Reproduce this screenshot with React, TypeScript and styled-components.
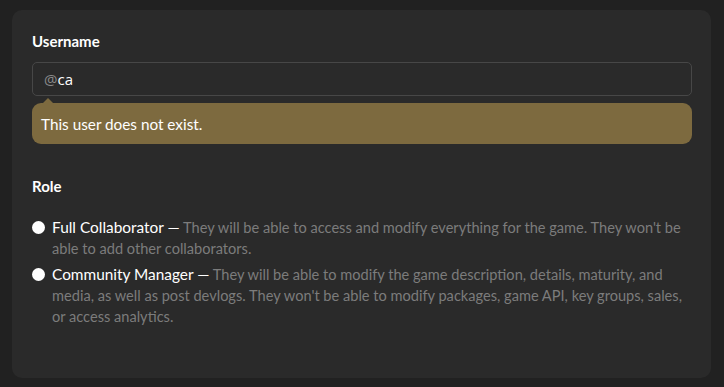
import React from "react";
import styled, { createGlobalStyle } from "styled-components";

const Global = createGlobalStyle`
  html, body { margin: 0; padding: 0; background: #212121; }
  body { font-family: "Lato", "Noto Sans", sans-serif; }
`;

const Page = styled.div`
  padding: 10px 13px 9px 12px;
  width: 724px;
  box-sizing: border-box;
`;

const Card = styled.div`
  background: #2a2a2a;
  border-radius: 10px;
  padding: 18px 19px 40px 20px;
  box-sizing: border-box;
  height: 368px;
`;

const Heading = styled.div`
  color: #ffffff;
  font-family: "Lato", sans-serif;
  font-weight: 700;
  font-size: 15px;
  line-height: 22px;
  margin-top: 2px;
`;

const InputBox = styled.div`
  margin-top: 10px;
  height: 34px;
  box-sizing: border-box;
  border: 1px solid #474747;
  border-radius: 5px;
  display: flex;
  align-items: center;
  padding: 0 11px;
  font-family: "Open Sans", sans-serif;
  font-size: 15px;
`;

const At = styled.span`
  color: #8a8a8a;
`;

const Value = styled.span`
  color: #ffffff;
`;

const Tooltip = styled.div`
  position: relative;
  margin-top: 7px;
  background: #7d6a3f;
  border-radius: 9px;
  height: 41px;
  display: flex;
  align-items: center;
  padding: 0 9px;
  color: #ffffff;
  font-family: "Lato", sans-serif;
  font-size: 15.3px;
  &::before {
    content: "";
    position: absolute;
    left: 10px;
    top: -5px;
    width: 0;
    height: 0;
    border-left: 6px solid transparent;
    border-right: 6px solid transparent;
    border-bottom: 6px solid #7d6a3f;
  }
`;

const RoleHeading = styled(Heading)`
  margin-top: 31px;
`;

const Options = styled.div`
  margin-top: 20px;
  display: flex;
  flex-direction: column;
  gap: 5px;
`;

const Option = styled.label`
  display: flex;
  align-items: flex-start;
  gap: 7px;
  font-family: "Lato", sans-serif;
  font-size: 14.6px;
  line-height: 21px;
`;

const Radio = styled.span`
  flex: none;
  width: 13px;
  height: 13px;
  border-radius: 50%;
  background: #ffffff;
  margin-top: 4px;
`;

const Title = styled.span`
  color: #ffffff;
  font-size: 15.4px;
`;

const Desc = styled.span`
  color: #7c7c7c;
`;

export default function App() {
  return (
    <>
      <Global />
      <Page>
        <Card>
          <Heading>Username</Heading>
          <InputBox>
            <At>@</At>
            <Value>ca</Value>
          </InputBox>
          <Tooltip>This user does not exist.</Tooltip>
          <RoleHeading>Role</RoleHeading>
          <Options>
            <Option>
              <Radio />
              <span>
                <Title>Full Collaborator —</Title>{" "}
                <Desc>
                  They will be able to access and modify everything for the game. They won't be able to add other collaborators.
                </Desc>
              </span>
            </Option>
            <Option>
              <Radio />
              <span>
                <Title>Community Manager —</Title>{" "}
                <Desc>
                  They will be able to modify the game description, details, maturity, and media, as well as post devlogs. They won't be able to modify packages, game API, key groups, sales, or access analytics.
                </Desc>
              </span>
            </Option>
          </Options>
        </Card>
      </Page>
    </>
  );
}
